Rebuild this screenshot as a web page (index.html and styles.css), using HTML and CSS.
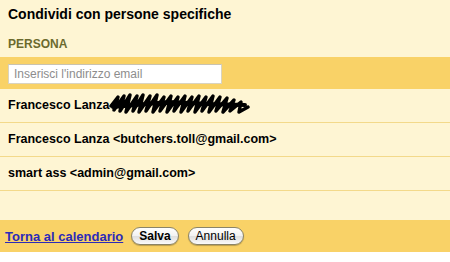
FILE: index.html
```html
<!DOCTYPE html>
<html lang="it">
<head>
<meta charset="utf-8">
<link rel="stylesheet" href="styles.css">
</head>
<body>
<div class="panel">
  <h1 class="title">Condividi con persone specifiche</h1>
  <div class="label">PERSONA</div>
  <div class="band">
    <input class="email" type="text" placeholder="Inserisci l'indirizzo email">
  </div>
  <div class="row">
    <span>Francesco Lanza</span>
    <svg class="scribble" width="142" height="26" viewBox="0 0 142 26">
      <path d="M2 15 L9 6 L5 19 L15 5 L11 20 L21 4 L17 21 L28 5 L24 20 L34 4 L30 21 L41 5 L37 20 L48 4 L44 21 L55 6 L51 20 L62 5 L58 21 L69 6 L65 20 L76 5 L72 21 L83 6 L79 20 L90 5 L86 21 L97 6 L93 20 L104 5 L100 21 L111 6 L107 20 L118 7 L114 21 L125 9 L121 20 L132 11 L130 21 L139 16" fill="none" stroke="#000" stroke-width="3.4" stroke-linejoin="round" stroke-linecap="round"/>
      <path d="M4 16 L60 11 L100 13 L136 14" fill="none" stroke="#000" stroke-width="4" stroke-linecap="round"/>
    </svg>
  </div>
  <div class="row">Francesco Lanza &lt;butchers.toll@gmail.com&gt;</div>
  <div class="row">smart ass &lt;admin@gmail.com&gt;</div>
  <div class="spacer"></div>
  <div class="footer">
    <a class="back" href="#">Torna al calendario</a>
    <button class="btn btn-bold">Salva</button>
    <button class="btn">Annulla</button>
  </div>
</div>
</body>
</html>
```
FILE: styles.css
```css
html, body {
  margin: 0;
  padding: 0;
  background: #ffffff;
}
body {
  font-family: "Liberation Sans", Arial, sans-serif;
  width: 450px;
  height: 262px;
  overflow: hidden;
}
.panel {
  background: #fef5d3;
}
.title {
  margin: 0;
  padding: 6px 8px 0 8px;
  height: 25px;
  box-sizing: border-box;
  font-size: 14px;
  font-weight: bold;
  color: #000;
  line-height: 16px;
}
.label {
  padding: 12px 8px 0 8px;
  height: 32px;
  box-sizing: border-box;
  font-size: 12px;
  font-weight: bold;
  color: #6b6a2e;
  line-height: 14px;
}
.band {
  background: #f9d267;
  height: 32px;
  box-sizing: border-box;
  padding: 7px 0 0 8px;
}
.email {
  display: block;
  width: 214px;
  height: 20px;
  box-sizing: border-box;
  margin: 0;
  border: 1px solid #d9d3c0;
  border-top-color: #c9c3b0;
  background: #fff;
  padding: 1px 5px;
  font-family: "Liberation Sans", Arial, sans-serif;
  font-size: 12px;
  outline: none;
}
.email::placeholder {
  color: #8d8d8d;
}
.row {
  display: flex;
  align-items: center;
  height: 34px;
  box-sizing: border-box;
  padding: 0 8px 2px 8px;
  border-bottom: 1px solid #f3d98a;
  font-size: 12.5px;
  font-weight: bold;
  color: #000;
}
.row:first-of-type {
  height: 31px;
}
.scribble {
  display: block;
  margin-left: 0;
  margin-top: -1px;
}
.spacer {
  height: 29px;
}
.footer {
  background: #f9d267;
  height: 32px;
  display: flex;
  align-items: center;
  padding: 0 0 0 5px;
  gap: 8px;
}
.back {
  font-size: 13px;
  font-weight: bold;
  color: #2c2ab9;
  text-decoration: underline;
}
.btn {
  height: 18px;
  padding: 0 7px;
  border-radius: 9px;
  border: 1px solid #8a8468;
  background: linear-gradient(#ffffff, #f2f2f2 50%, #dedede 51%, #fbfbfb);
  box-shadow: 0 1px 1px rgba(0,0,0,0.25);
  font-family: "Liberation Sans", Arial, sans-serif;
  font-size: 12px;
  color: #000;
  line-height: 15px;
  margin: 0;
}
.btn-bold {
  font-weight: bold;
}
.btn-bold + .btn {
  margin-left: 1px;
}
```
